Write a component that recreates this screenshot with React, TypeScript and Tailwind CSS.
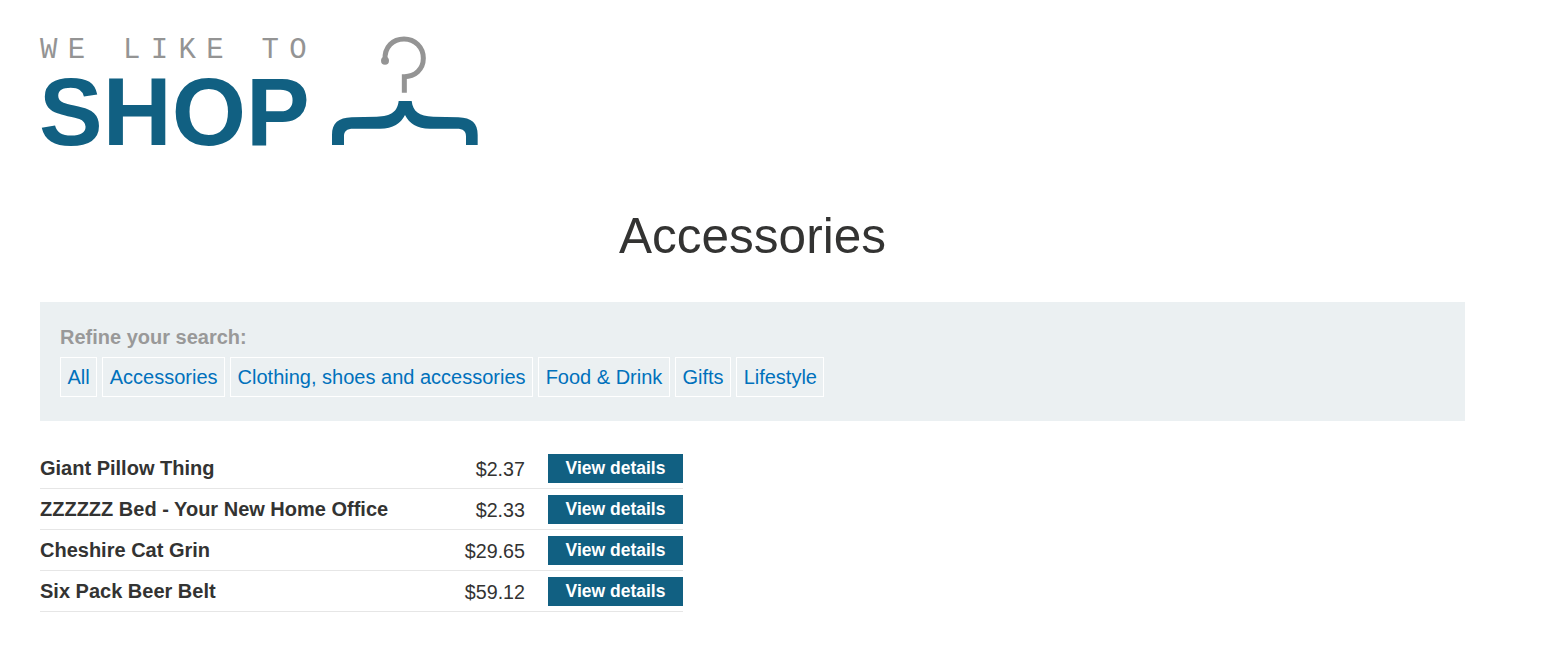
const categories = ['All', 'Accessories', 'Clothing, shoes and accessories', 'Food & Drink', 'Gifts', 'Lifestyle'];

const products = [
  { name: 'Giant Pillow Thing', price: '$2.37' },
  { name: 'ZZZZZZ Bed - Your New Home Office', price: '$2.33' },
  { name: 'Cheshire Cat Grin', price: '$29.65' },
  { name: 'Six Pack Beer Belt', price: '$59.12' },
];

function Hanger() {
  return (
    <svg width="170" height="125" viewBox="0 0 510 375" className="shrink-0">
      <path
        d="M195 92 C192 50 220 27 252 27 C285 27 310 52 310 85 C310 118 285 140 253 140 L253 188"
        fill="none"
        stroke="#949494"
        strokeWidth="15"
      />
      <circle cx="195" cy="92" r="12" fill="#949494" />
      <path
        d="M36 345 L36 315 C36 280 55 263 95 262 L170 260 C215 258 232 245 236 213 L275 213 C279 245 296 258 340 260 L415 262 C455 263 473 280 473 315 L473 345 L438 345 L438 320 C438 303 430 296 410 296 L330 296 C290 296 268 280 255 255 C242 280 220 296 180 296 L100 296 C80 296 72 303 72 320 L72 345 Z"
        fill="#116082"
      />
    </svg>
  );
}

export default function App() {
  return (
    <main className="min-h-screen bg-white pl-10 pr-[89px] font-['Liberation_Sans',Arial,sans-serif] text-[#333332]">
      <header className="flex pt-[30px]">
        <div className="w-[280px] shrink-0">
          <div className="mt-[6px] h-[27px] whitespace-pre font-['Liberation_Mono',monospace] text-[29px] leading-[30px] tracking-[10.3px] text-[#949494]">
            WE LIKE TO
          </div>
          <div className="-ml-px h-[92px] pt-[3px] text-[95.5px] leading-[92px] font-bold text-[#116082]">SHOP</div>
        </div>
        <Hanger />
      </header>

      <h1 className="mt-[36px] h-[90px] text-center text-[49.5px] leading-[90px] font-normal">Accessories</h1>

      <section className="mt-[21px] h-[119px] bg-[#ebf0f2] px-5 pt-[22px]">
        <div className="h-[33px] text-[20px] leading-[26px] font-bold text-[#999999]">Refine your search:</div>
        <div className="flex gap-[5.3px]">
          {categories.map((c) => (
            <a
              key={c}
              href="#"
              className="h-10 border border-white px-[6.4px] text-[20px] leading-[38px] whitespace-nowrap text-[#0071bc]"
            >
              {c}
            </a>
          ))}
        </div>
      </section>

      <div className="mt-[27px] w-[643px]">
        {products.map((p) => (
          <div key={p.name} className="flex h-[41px] items-start border-b border-[#e6e6e6] pt-[6px]">
            <div className="flex-1 text-[20px] leading-[28px] font-bold">{p.name}</div>
            <div className="text-[19.7px] leading-[30px]">{p.price}</div>
            <button className="ml-[23px] h-[29px] w-[135px] bg-[#116082] text-[17.5px] leading-[25px] font-bold text-white">
              View details
            </button>
          </div>
        ))}
      </div>
    </main>
  );
}
